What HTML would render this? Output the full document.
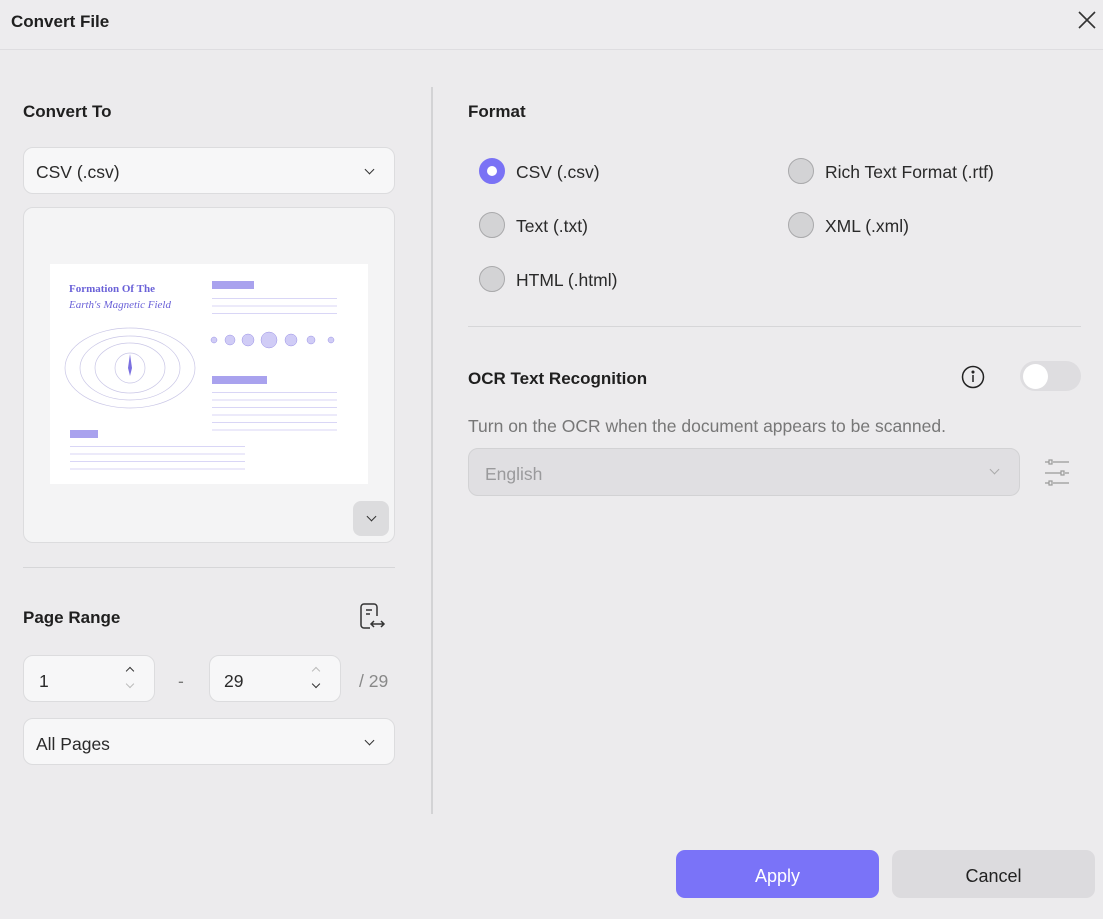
<!DOCTYPE html>
<html><head><style>
body{margin:0;width:1103px;height:919px;background:#ecebed;font-family:"Liberation Sans",sans-serif;color:#222;position:relative;overflow:hidden}
.a{position:absolute}
.box{position:absolute;background:#f7f7f8;border:1px solid #dcdcde;border-radius:10px;box-sizing:border-box}
.h{position:absolute;font-weight:bold;font-size:17px;color:#1f1f1f}
.t{position:absolute;font-size:17.5px;color:#2a2a2a}
.rad{position:absolute;width:26px;height:26px;border-radius:50%;background:#d3d3d5;border:1px solid #a9a9ab;box-sizing:border-box}
.chev{position:absolute;width:6px;height:6px;border-right:1.6px solid #333;border-bottom:1.6px solid #333;transform:rotate(45deg)}
</style></head><body>
<div class="a" style="left:0;top:0;width:1103px;height:49px;border-bottom:1px solid #dedde0;background:#edecee"></div>
<div class="h" style="left:11px;top:12px;font-size:17px">Convert File</div>
<svg class="a" style="left:1078px;top:11px" width="18" height="18"><path d="M1 1L17 17M17 1L1 17" stroke="#333" stroke-width="1.6"/></svg>

<div class="h" style="left:23px;top:102px">Convert To</div>
<div class="box" style="left:23px;top:147px;width:372px;height:47px"></div>
<div class="t" style="left:36px;top:162px">CSV (.csv)</div>
<div class="chev" style="left:366px;top:166px"></div>

<div class="box" style="left:23px;top:207px;width:372px;height:336px;background:#f4f4f5"></div>
<div class="a" style="left:50px;top:264px;width:318px;height:220px;background:#fff">
<div class="a" style="left:19px;top:19px;font-family:'Liberation Serif',serif;font-weight:bold;font-size:11px;color:#6b62d8">Formation Of The</div>
<div class="a" style="left:19px;top:35px;font-family:'Liberation Serif',serif;font-style:italic;font-size:11px;color:#6b62d8">Earth's Magnetic Field</div>
<svg class="a" style="left:10px;top:60px" width="150" height="100"><g fill="none" stroke="#c9c6e6" stroke-width="0.7"><ellipse cx="70" cy="44" rx="15" ry="15"/><ellipse cx="70" cy="44" rx="35" ry="25"/><ellipse cx="70" cy="44" rx="50" ry="32"/><ellipse cx="70" cy="44" rx="65" ry="40"/></g><path d="M70 30L72 44L70 52L68 44Z" fill="#7b70e0"/></svg>
<div class="a" style="left:162px;top:17px;width:42px;height:8px;background:#a9a2ee"></div>
<div class="a" style="left:162px;top:30px;width:125px;height:26px;background:repeating-linear-gradient(#fff 0 4px,#d9d6f6 4px 5px,#fff 5px 7.5px)"></div>
<svg class="a" style="left:158px;top:66px" width="140" height="34"><g fill="#d0ccf6" stroke="#9a92e6" stroke-width=".5"><circle cx="6" cy="10" r="3"/><circle cx="22" cy="10" r="5"/><circle cx="40" cy="10" r="6"/><circle cx="61" cy="10" r="8"/><circle cx="83" cy="10" r="6"/><circle cx="103" cy="10" r="4"/><circle cx="123" cy="10" r="3"/></g></svg>
<div class="a" style="left:162px;top:112px;width:55px;height:8px;background:#a9a2ee"></div>
<div class="a" style="left:162px;top:124px;width:125px;height:48px;background:repeating-linear-gradient(#fff 0 4px,#d9d6f6 4px 5px,#fff 5px 7.5px)"></div>
<div class="a" style="left:20px;top:166px;width:28px;height:8px;background:#a9a2ee"></div>
<div class="a" style="left:20px;top:178px;width:175px;height:30px;background:repeating-linear-gradient(#fff 0 4px,#d9d6f6 4px 5px,#fff 5px 7.5px)"></div>
</div>
<div class="a" style="left:353px;top:501px;width:36px;height:35px;border-radius:8px;background:#dcdcde"></div>
<div class="chev" style="left:368px;top:513px"></div>

<div class="a" style="left:23px;top:567px;width:372px;height:1px;background:#d6d6d8"></div>
<div class="h" style="left:23px;top:608px">Page Range</div>
<svg class="a" style="left:358px;top:602px" width="28" height="28" fill="none" stroke="#333" stroke-width="1.5"><path d="M12 26H6a3 3 0 0 1-3-3V5a3 3 0 0 1 3-3h10a3 3 0 0 1 3 3v9"/><path d="M8 8h6M8 12h4M13 22h13M16 19l-3 3 3 3M23 19l3 3-3 3"/></svg>
<div class="box" style="left:23px;top:655px;width:132px;height:47px"></div>
<div class="t" style="left:39px;top:671px">1</div>
<div class="chev" style="left:127px;top:668px;transform:rotate(225deg);width:5px;height:5px"></div>
<div class="chev" style="left:127px;top:681px;width:5px;height:5px;border-color:#bbb"></div>
<div class="t" style="left:178px;top:671px;color:#777">-</div>
<div class="box" style="left:209px;top:655px;width:132px;height:47px"></div>
<div class="t" style="left:224px;top:671px">29</div>
<div class="chev" style="left:313px;top:668px;transform:rotate(225deg);width:5px;height:5px;border-color:#bbb"></div>
<div class="chev" style="left:313px;top:681px;width:5px;height:5px"></div>
<div class="t" style="left:359px;top:671px;color:#888">/ 29</div>
<div class="box" style="left:23px;top:718px;width:372px;height:47px"></div>
<div class="t" style="left:36px;top:734px">All Pages</div>
<div class="chev" style="left:366px;top:737px"></div>

<div class="a" style="left:431px;top:87px;width:2px;height:727px;background:#d3d3d5"></div>

<div class="h" style="left:468px;top:102px">Format</div>
<div class="rad" style="left:479px;top:158px;background:#7a72f5;border-color:#7a72f5"><div class="a" style="left:7px;top:7px;width:10px;height:10px;border-radius:50%;background:#fff"></div></div>
<div class="t" style="left:516px;top:162px">CSV (.csv)</div>
<div class="rad" style="left:788px;top:158px"></div><div class="t" style="left:825px;top:162px">Rich Text Format (.rtf)</div>
<div class="rad" style="left:479px;top:212px"></div><div class="t" style="left:516px;top:216px">Text (.txt)</div>
<div class="rad" style="left:788px;top:212px"></div><div class="t" style="left:825px;top:216px">XML (.xml)</div>
<div class="rad" style="left:479px;top:266px"></div><div class="t" style="left:516px;top:270px">HTML (.html)</div>
<div class="a" style="left:468px;top:326px;width:613px;height:1px;background:#d6d6d8"></div>
<div class="h" style="left:468px;top:369px">OCR Text Recognition</div>
<svg class="a" style="left:961px;top:365px" width="24" height="24" fill="none" stroke="#222" stroke-width="1.5"><circle cx="12" cy="12" r="10.5"/><path d="M12 10v7"/><circle cx="12" cy="7" r=".8" fill="#222"/></svg>
<div class="a" style="left:1020px;top:361px;width:61px;height:30px;border-radius:15px;background:#dedde0"></div>
<div class="a" style="left:1023px;top:364px;width:25px;height:25px;border-radius:50%;background:#fff"></div>
<div class="t" style="left:468px;top:416px;color:#777">Turn on the OCR when the document appears to be scanned.</div>
<div class="box" style="left:468px;top:448px;width:552px;height:48px;background:#e0dfe2;border-color:#d2d2d4"></div>
<div class="t" style="left:485px;top:464px;color:#9a9a9c">English</div>
<div class="chev" style="left:991px;top:466px;border-color:#aaa"></div>
<svg class="a" style="left:1044px;top:457px" width="26" height="30" stroke="#999" stroke-width="1.2" fill="none"><path d="M1 5h4M9 5h16M1 16h16M21 16h4M1 26h4M9 26h16"/><rect x="5" y="3" width="3" height="4"/><rect x="17" y="14" width="3" height="4"/><rect x="5" y="24" width="3" height="4"/></svg>

<div class="a" style="left:676px;top:850px;width:203px;height:48px;border-radius:9px;background:#7a73f8;color:#fff;font-size:18px;text-align:center;line-height:52px">Apply</div>
<div class="a" style="left:892px;top:850px;width:203px;height:48px;border-radius:9px;background:#dcdbde;color:#222;font-size:18px;text-align:center;line-height:52px">Cancel</div>
</body></html>
